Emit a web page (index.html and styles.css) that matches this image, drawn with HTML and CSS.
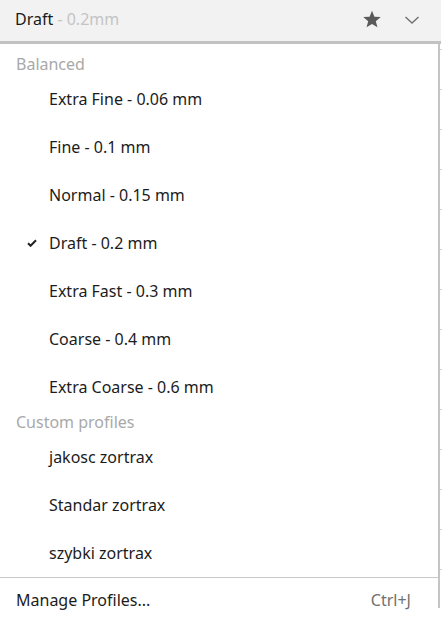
FILE: index.html
```html
<!DOCTYPE html>
<html>
<head>
<meta charset="utf-8">
<link rel="stylesheet" href="styles.css">
</head>
<body>
<div class="page">
  <div class="topbar">
    <span class="title">Draft</span><span class="subtitle">&nbsp;- 0.2mm</span>
    <span class="spacer"></span>
    <svg class="star" width="20" height="19" viewBox="0 0 24 23"><path d="M12 1 L14.9 8.2 L22.6 8.6 L16.6 13.5 L18.6 21 L12 16.8 L5.4 21 L7.4 13.5 L1.4 8.6 L9.1 8.2 Z" fill="#5a5a5a"/></svg>
    <svg class="chev" width="16" height="10" viewBox="0 0 16 10"><path d="M1.5 2 L8 8 L14.5 2" fill="none" stroke="#707070" stroke-width="1.4"/></svg>
  </div>
  <div class="body">
    <div class="menu">
      <div class="section first">Balanced</div>
      <div class="item">Extra Fine - 0.06 mm</div>
      <div class="item">Fine - 0.1 mm</div>
      <div class="item">Normal - 0.15 mm</div>
      <div class="item checked"><svg class="check" width="10" height="8" viewBox="0 0 10 8"><path d="M1 4.2 L3.6 6.8 L9 1.2" fill="none" stroke="#222" stroke-width="2"/></svg>Draft - 0.2 mm</div>
      <div class="item">Extra Fast - 0.3 mm</div>
      <div class="item">Coarse - 0.4 mm</div>
      <div class="item">Extra Coarse - 0.6 mm</div>
      <div class="section">Custom profiles</div>
      <div class="item">jakosc zortrax</div>
      <div class="item">Standar zortrax</div>
      <div class="item">szybki zortrax</div>
      <div class="sep"></div>
      <div class="manage"><span>Manage Profiles...</span><span class="shortcut">Ctrl+J</span></div>
    </div>
    <div class="behind"></div>
  </div>
</div>
</body>
</html>
```
FILE: styles.css
```css
html, body {
  margin: 0;
  padding: 0;
  background: #ffffff;
}
body {
  font-family: "Noto Sans", "Open Sans", sans-serif;
  width: 444px;
  height: 617px;
  overflow: hidden;
}
.page {
  display: flex;
  flex-direction: column;
  width: 444px;
}
.topbar {
  width: 441px;
  box-sizing: border-box;
  background: #f2f2f2;
  border-bottom: 3px solid #c2c2c2;
  height: 44px;
  display: flex;
  align-items: center;
  padding: 0 0 3px 15px;
  font-size: 16px;
}
.title {
  color: #1a1a1a;
}
.subtitle {
  color: #c4c4c4;
}
.spacer {
  flex: 1;
}
.star {
  margin-right: 22px;
}
.chev {
  margin-right: 21px;
  margin-top: 1px;
}
.body {
  display: flex;
}
.menu {
  width: 440px;
  border-right: 2px solid #c4c4c4;
  padding-top: 9px;
  height: 564px;
  box-sizing: border-box;
}
.behind {
  width: 2px;
  height: 564px;
  background: repeating-linear-gradient(to bottom, #ffffff 0, #ffffff 5px, #d0d0d0 5px, #d0d0d0 6px, #ffffff 6px, #ffffff 40px);
}
.section {
  height: 22px;
  line-height: 22px;
  padding-left: 16px;
  font-size: 16px;
  color: #a9a9a9;
}
.item {
  height: 48px;
  line-height: 48px;
  padding-left: 49px;
  font-size: 16px;
  color: #1c1c1c;
  position: relative;
}
.check {
  position: absolute;
  left: 27px;
  top: 20px;
}
.sep {
  height: 1px;
  background: #c8c8c8;
}
.manage {
  height: 44px;
  display: flex;
  align-items: center;
  justify-content: space-between;
  padding: 0 27px 0 16px;
  font-size: 16px;
  color: #1c1c1c;
}
.shortcut {
  color: #707070;
}
```
